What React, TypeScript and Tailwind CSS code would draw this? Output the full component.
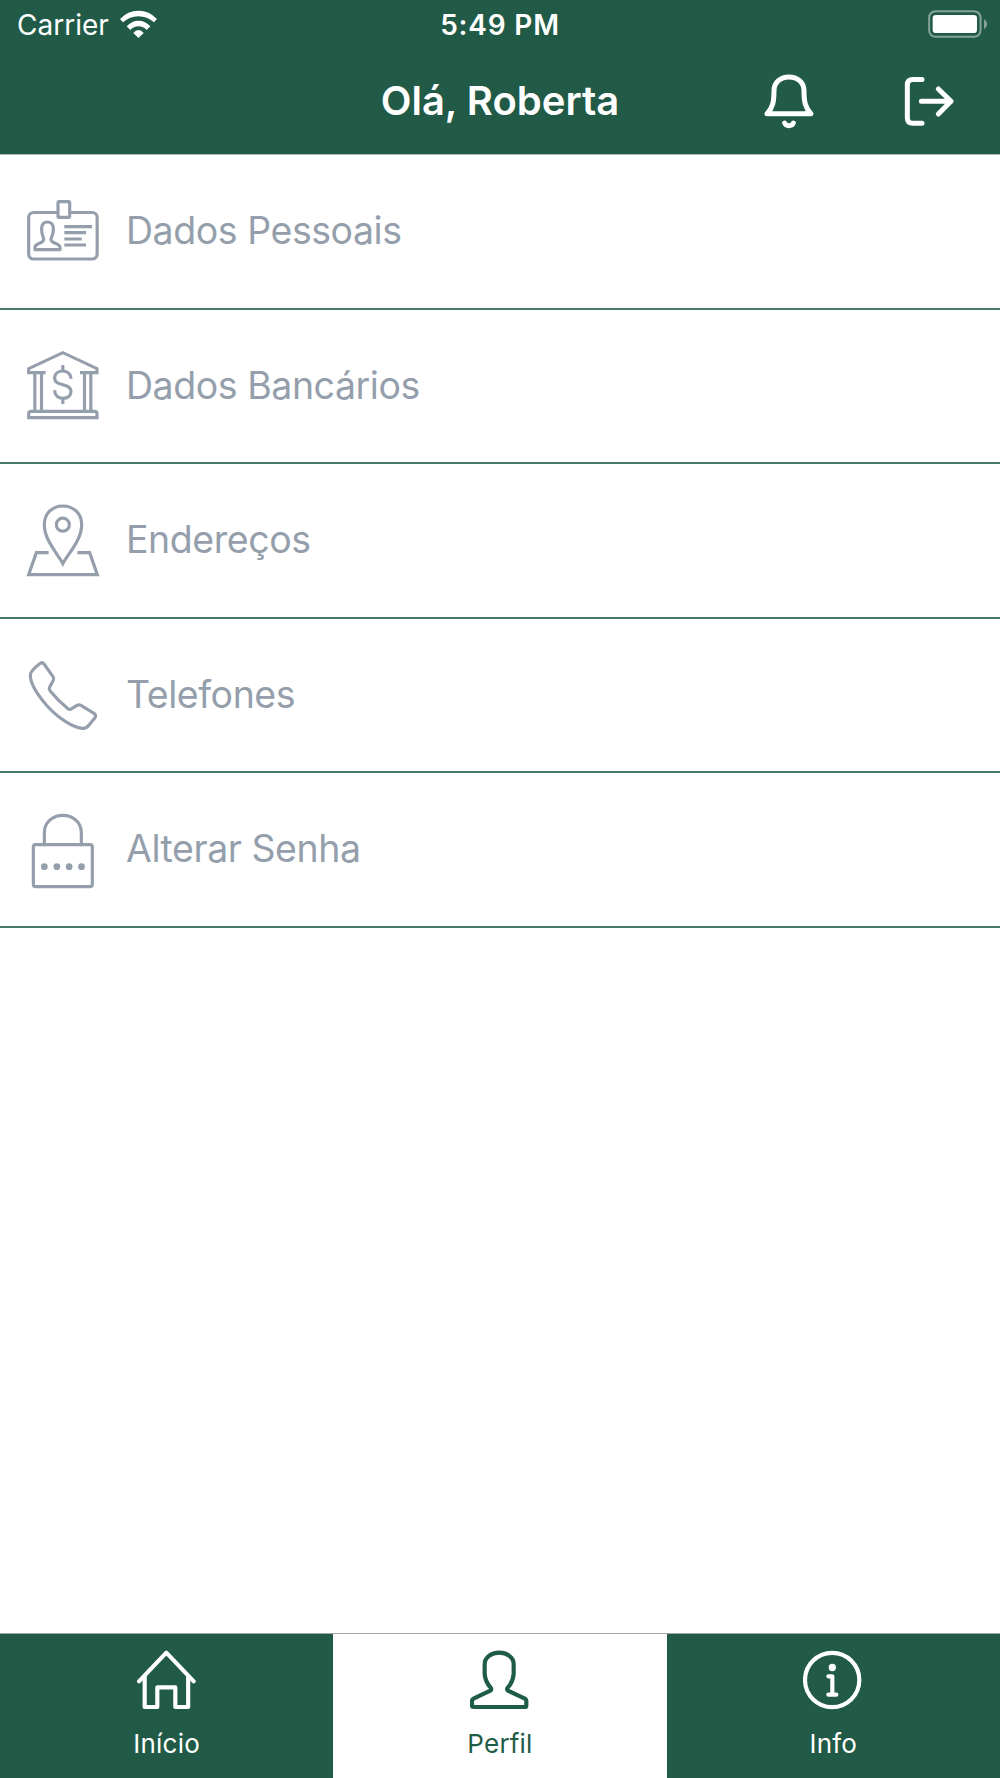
import React from "react";

interface IconProps {
  children: React.ReactNode;
  viewBox: string;
  className: string;
  strokeWidth: number;
}

const Icon: React.FC<IconProps> = ({ children, viewBox, className, strokeWidth }) => (
  <svg
    viewBox={viewBox}
    className={className}
    fill="none"
    stroke="currentColor"
    strokeWidth={strokeWidth}
    strokeLinecap="round"
    strokeLinejoin="round"
  >
    {children}
  </svg>
);

const menuItems = [
  {
    label: "Dados Pessoais",
    row: "h-[155px] pb-px",
    viewBox: "39 33 240 243",
    icon: (
      <>
        <rect x="56" y="97.5" width="205.5" height="139.5" rx="15" />
        <rect x="144" y="65" width="35" height="47" rx="3" fill="white" />
        <path d="M75 209 V202 C75 195 82 192 90 189 C98 186 101 184 101 178 C101 171 95 165 95 151 V145 C95 133 102 126 112 126 C122 126 130 133 130 145 V151 C130 165 123 171 123 178 C123 184 126 186 134 189 C142 192 150 195 150 202 V209 Z" />
        <path d="M163 140 H246 M163 158 H228 M163 177 H215 M163 195 H228" strokeLinecap="butt" />
      </>
    ),
  },
  {
    label: "Dados Bancários",
    row: "h-[154px]",
    viewBox: "39 30 240 243",
    icon: (
      <g strokeLinecap="butt" strokeLinejoin="miter">
        <path d="M107 110 H56 V98 L158.500 50 L261 98 V110 H210" />
        <path d="M74.500 110 V226 M94.500 110 V226 M223.500 110 V226 M242.500 110 V226" />
        <path d="M56 245 V233 C56 229 59 226 63 226 H254 C258 226 261 229 261 233 V245 Z" />
        <path d="M158.500 87 V104 M158.500 188 V204" />
        <path d="M183 128 C183 114 172 105 159 105 C145 105 134 113 134 126 C134 139 144 142 159 146 C174 150 183 154 183 166 C183 179 173 187 159 187 C144 187 134 178 134 163" />
      </g>
    ),
  },
  {
    label: "Endereços",
    row: "h-[155px] pb-px",
    viewBox: "39 30 240 243",
    icon: (
      <g strokeLinecap="butt" strokeLinejoin="miter">
        <path d="M158.500 221 C144 192 103 151 103 104 C103 71 126 48 158.500 48 C191 48 215 71 215 104 C215 151 173 192 158.500 221 Z" />
        <circle cx="158.500" cy="104" r="19.500" />
        <path d="M116 188 H79 L56 254 H262 L239 188 H202" />
      </g>
    ),
  },
  {
    label: "Telefones",
    row: "h-[154px]",
    viewBox: "39 27 240 243",
    icon: (
      <path d="M91 52 C95 49 99 50 102 54 L129 92 C132 96 132 99 130 103 L119 123 C117 127 117 130 120 134 Q144 164 174 188 C178 191 181 191 185 188 L201 178 C205 176 209 176 213 178 L252 202 C258 206 258 210 255 215 L237 237 C231 245 225 248 217 247 C188 243 145 218 109 177 C76 139 61 107 61 88 C61 83 62 79 66 75 Q77 62 91 52 Z" />
    ),
  },
  {
    label: "Alterar Senha",
    row: "h-[155px]",
    viewBox: "39 27 240 243",
    icon: (
      <>
        <rect x="70" y="134" width="177" height="126" rx="7" />
        <path d="M103 134 V98 C103 67 128 46 158.500 46 C189 46 214 67 214 98 V134" />
        <g fill="currentColor" stroke="none">
          <circle cx="103" cy="200" r="10" />
          <circle cx="140.500" cy="200" r="10" />
          <circle cx="177.500" cy="200" r="10" />
          <circle cx="214.500" cy="200" r="10" />
        </g>
      </>
    ),
  },
];

const tabs = [
  {
    label: "Início",
    color: "bg-[#215a46] text-white",
    viewBox: "110 75 180 180",
    icon: (
      <>
        <path d="M116 169 L198 83 L280 169" />
        <path d="M133 153 V246 H171 V187 H225 V246 H263.500 V153" />
      </>
    ),
  },
  {
    label: "Perfil",
    color: "bg-white text-[#1f5c47]",
    viewBox: "120 75 180 180",
    icon: (
      <path d="M130 246 C127 246 126 245 126 242 V228 C126 225 128 222 132 220 L181 197 C184 195 185 192 182 188 C170 175 165 162 164 147 V117 C164 97 184 83 207.500 83 C231 83 251 97 251 117 V147 C250 162 245 175 233 188 C230 192 231 195 234 197 L283 220 C287 222 289 225 289 228 V242 C289 245 288 246 285 246 Z" />
    ),
  },
  {
    label: "Info",
    color: "bg-[#215a46] text-white",
    viewBox: "130 75 180 180",
    icon: (
      <>
        <circle cx="217.500" cy="165" r="81.500" />
        <circle cx="218" cy="127.500" r="11" fill="currentColor" stroke="none" />
        <path d="M206 154 H218 V209 M206 209 H230" />
      </>
    ),
  },
];

const StatusBar = () => (
  <div className="grid h-[50px] grid-cols-3 items-center text-[28px] leading-none">
    <div className="flex items-center pl-[17px]">
      <span>Carrier</span>
      <svg viewBox="360 27 111 84" className="ml-[11px] h-[28px] w-[37px] -translate-y-px" fill="currentColor">
        <path d="M360 54 Q383 29 415.500 29 Q448 29 471 54 L462 64 Q442 46 415.500 46 Q389 46 369 64 Z" />
        <path d="M380 76 Q395 59 415.500 59 Q436 59 451 76 L440 87 Q430 76 415.500 76 Q401 76 391 87 Z" />
        <path d="M400 96 Q407 87 415.500 87 Q424 87 431 96 L415.500 111 Z" />
      </svg>
    </div>
    <span className="text-center font-semibold tracking-[0.8px]">5:49 PM</span>
    <svg viewBox="624 30 180 84" className="mr-[12px] h-[28px] w-[60px] -translate-y-px justify-self-end">
      <rect x="627.500" y="33.500" width="154" height="77" rx="19" fill="none" stroke="#87a399" strokeWidth="6" />
      <rect x="638" y="45" width="133" height="54" rx="10" fill="white" />
      <path d="M792 58 Q801 63 801 72.500 Q801 82 792 87 Z" fill="#87a399" />
    </svg>
  </div>
);

const Header = () => (
  <header className="h-[155px] border-b border-[#b5b8b6] bg-[#215a46] text-white">
    <StatusBar />
    <div className="grid h-[104px] grid-cols-3 items-center">
      <div />
      <h1 className="pb-[2px] text-center text-[40px] leading-none font-semibold whitespace-nowrap">Olá, Roberta</h1>
      <div className="flex justify-end gap-[80px] pr-[40px]">
        <Icon viewBox="120 216 180 180" className="size-[60px]" strokeWidth={15}>
          <path d="M141 341 C158 324 162 306 162 272 C162 247 182 231 207 231 C232 231 252 247 252 272 C252 306 256 324 273 341 Z" />
          <path d="M194 369 C198 380 216 380 220 369" />
        </Icon>
        <Icon viewBox="540 216 180 180" className="size-[60px]" strokeWidth={15}>
          <path d="M606 238.500 H579 Q562 238.500 562 255 V354 Q562 370 579 370 H606" />
          <path d="M604 304 H693 M655 267 L693 304 L655 342" />
        </Icon>
      </div>
    </div>
  </header>
);

const App: React.FC = () => {
  return (
    <div className="flex h-[1778px] w-[1000px] flex-col overflow-hidden bg-white font-[Inter,sans-serif]">
      <Header />
      {/* MENU */}
      <ul className="flex-1">
        {menuItems.map((item) => (
          <li
            key={item.label}
            className={`flex items-center border-b-2 border-[#467968] pl-[23px] text-[#959fac] ${item.row}`}
          >
            <Icon viewBox={item.viewBox} className="h-[81px] w-[80px]" strokeWidth={9.5}>
              {item.icon}
            </Icon>
            <span className="ml-[23px] pb-px text-[37.5px] leading-none tracking-[-0.45px]">{item.label}</span>
          </li>
        ))}
      </ul>
      {/* TABS */}
      <nav className="grid h-[145px] grid-cols-3 border-t border-[#a3a8a5]">
        {tabs.map((tab) => (
          <button key={tab.label} className={`flex flex-col items-center pt-[16px] ${tab.color}`}>
            <Icon viewBox={tab.viewBox} className="size-[60px]" strokeWidth={12.5}>
              {tab.icon}
            </Icon>
            <span className="mt-[21px] text-[26px] leading-none tracking-[0.2px]">{tab.label}</span>
          </button>
        ))}
      </nav>
    </div>
  );
};

export default App;
